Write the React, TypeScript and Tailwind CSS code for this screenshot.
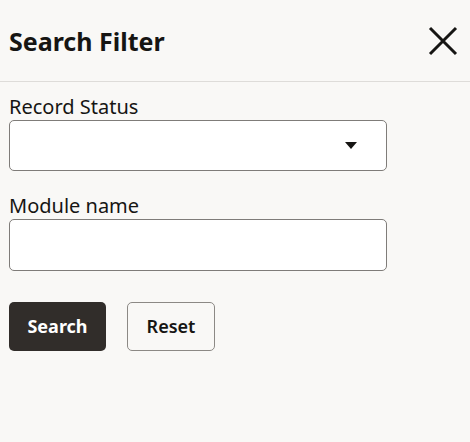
export default function App() {
  return (
    <div
      className="w-[470px] h-[442px] bg-[#f9f8f6] text-[#161513]"
      style={{ fontFamily: '"Noto Sans", "Open Sans", sans-serif' }}
    >
      <div className="h-[82px] flex items-center justify-between pl-[9px] pr-[12px] border-b border-[#dedcd9]">
        <h1 className="text-[25px] font-bold leading-none mt-[1px]">Search Filter</h1>
        <button className="w-[30px] h-[30px] flex items-center justify-center" aria-label="Close">
          <svg width="30" height="30" viewBox="0 0 30 30" fill="none">
            <path d="M2 2 L28 28 M28 2 L2 28" stroke="#161513" strokeWidth="3" />
          </svg>
        </button>
      </div>
      <div className="px-[9px] pt-[12px] w-[396px]">
        <label className="block text-[20px] leading-[26px]">Record Status</label>
        <div className="h-[51px] bg-white border border-[#7f7c79] rounded-[5px] flex items-center justify-end pr-[29px]">
          <svg width="12" height="7" viewBox="0 0 12 7">
            <path d="M0 0 H12 L6 7 Z" fill="#161513" />
          </svg>
        </div>
        <label className="block mt-[22px] text-[20px] leading-[26px]">Module name</label>
        <div className="h-[52px] bg-white border border-[#7f7c79] rounded-[5px]" />
        <div className="flex gap-[21px] mt-[31px]">
          <button className="w-[97px] h-[49px] rounded-[5px] bg-[#312d2a] text-white text-[18px] font-bold">
            Search
          </button>
          <button className="w-[88px] h-[49px] rounded-[5px] border border-[#8c8985] text-[18px] font-semibold">
            Reset
          </button>
        </div>
      </div>
    </div>
  );
}
